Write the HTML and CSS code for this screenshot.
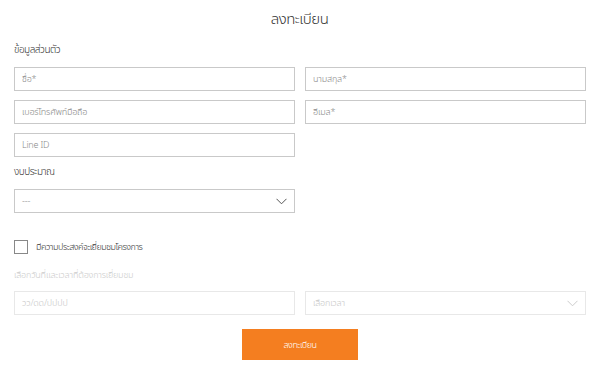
FILE: index.html
```html
<!DOCTYPE html>
<html lang="th">
<head>
<meta charset="utf-8">
<link rel="stylesheet" href="styles.css">
</head>
<body>
<div class="page">
  <h1 class="title">ลงทะเบียน</h1>
  <div class="section-label">ข้อมูลส่วนตัว</div>
  <div class="grid">
    <div class="field"><span class="ph">ชื่อ*</span></div>
    <div class="field"><span class="ph">นามสกุล*</span></div>
    <div class="field"><span class="ph">เบอร์โทรศัพท์มือถือ</span></div>
    <div class="field"><span class="ph">อีเมล*</span></div>
    <div class="field"><span class="ph">Line ID</span></div>
  </div>
  <div class="label budget">งบประมาณ</div>
  <div class="grid">
    <div class="field select"><span class="ph">---</span>
      <svg class="chev" width="11" height="7" viewBox="0 0 11 7"><path d="M0.5 0.8 L5.5 5.8 L10.5 0.8" fill="none" stroke="#555" stroke-width="1"/></svg>
    </div>
  </div>
  <div class="check-row">
    <span class="box"></span>
    <span class="check-label">มีความประสงค์จะเยี่ยมชมโครงการ</span>
  </div>
  <div class="label muted">เลือกวันที่และเวลาที่ต้องการเยี่ยมชม</div>
  <div class="grid">
    <div class="field disabled"><span class="ph">วว/ดด/ปปปป</span></div>
    <div class="field disabled select"><span class="ph">เลือกเวลา</span>
      <svg class="chev" width="11" height="7" viewBox="0 0 11 7"><path d="M0.5 0.8 L5.5 5.8 L10.5 0.8" fill="none" stroke="#ccc" stroke-width="1"/></svg>
    </div>
  </div>
  <div class="actions">
    <button class="submit">ลงทะเบียน</button>
  </div>
</div>
</body>
</html>
```
FILE: styles.css
```css
html, body {
  margin: 0;
  padding: 0;
  background: #fff;
}
body {
  font-family: "Noto Sans Thai", "Noto Sans", "DejaVu Sans", sans-serif;
  font-weight: 300;
  letter-spacing: -0.5px;
  color: #333;
}
.page {
  padding: 0 15px 0 14px;
  display: flex;
  flex-direction: column;
}
.title {
  margin: 9px 0 0;
  font-size: 15px;
  font-weight: 300;
  text-align: center;
  line-height: 22px;
  color: #333;
}
.section-label {
  margin-top: 12px;
  font-size: 10px;
  line-height: 14px;
  color: #333;
}
.grid {
  display: grid;
  grid-template-columns: 281px 281px;
  column-gap: 10px;
  row-gap: 9px;
}
.section-label + .grid {
  margin-top: 10px;
}
.field {
  height: 24px;
  box-sizing: border-box;
  border: 1px solid #c9c9c9;
  display: flex;
  align-items: center;
  justify-content: space-between;
  padding: 0 7px 0 7px;
}
.ph {
  font-size: 9px;
  letter-spacing: -0.2px;
  color: #888;
}
.label {
  font-size: 10px;
  line-height: 14px;
}
.budget {
  margin-top: 8px;
  margin-bottom: 10px;
}
.check-row {
  margin-top: 27px;
  display: flex;
  align-items: center;
  gap: 8px;
}
.box {
  width: 12px;
  height: 12px;
  border: 1px solid #888;
  display: block;
}
.check-label {
  font-size: 9px;
  color: #333;
}
.muted {
  margin-top: 14px;
  margin-bottom: 9px;
  font-size: 9px;
  letter-spacing: -0.2px;
  color: #ccc;
}
.disabled {
  border-color: #e8e8e8;
}
.disabled .ph {
  color: #c8c8c8;
}
.actions {
  display: flex;
  justify-content: center;
  margin-top: 14px;
}
.submit {
  width: 116px;
  height: 31px;
  border: none;
  background: #f47e20;
  color: #fff;
  font-family: inherit;
  font-weight: 300;
  letter-spacing: -0.5px;
  font-size: 9px;
  margin-left: 1px;
}
```
